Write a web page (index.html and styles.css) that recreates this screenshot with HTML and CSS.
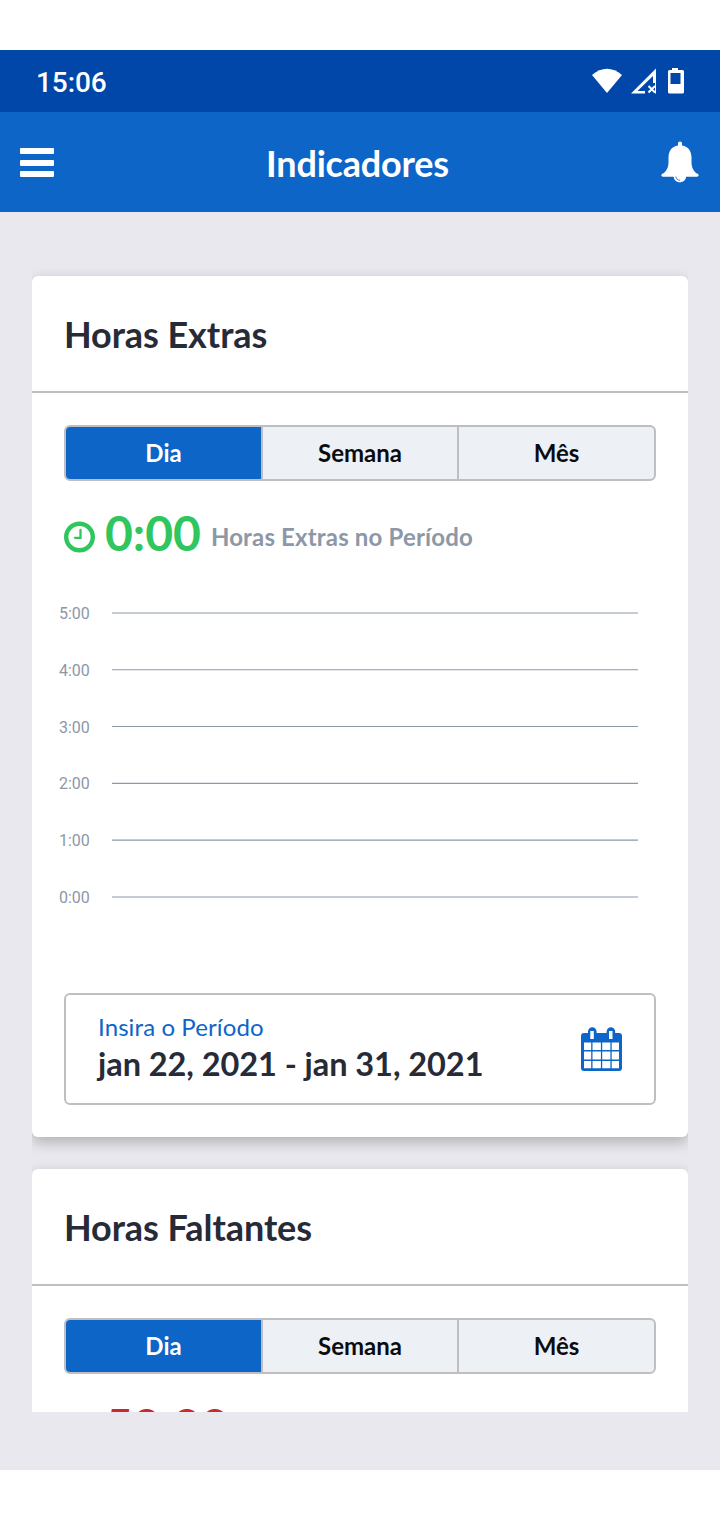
FILE: index.html
```html
<!DOCTYPE html>
<html lang="pt-BR">
<head>
<meta charset="utf-8">
<title>Indicadores</title>
<link rel="stylesheet" href="styles.css">
</head>
<body>
<div class="app">
  <div class="status-bar">
    <span class="status-time">15:06</span>
    <svg class="status-icons" width="94" height="28" viewBox="0 0 94 28" fill="#fff">
      <path d="M1 8 Q16 -4.500 31 8 L16 26Z"/>
      <path fill-rule="evenodd" d="M40 26.500 L65 1.500 V16 H62 V9 L46.500 24 H54 V26.500Z"/>
      <path d="M57.500 19l6.500 6.500M64 19L57.500 25.500" stroke="#fff" stroke-width="2"/>
      <path d="M64.500 16v10.500" stroke="#fff"/>
      <path fill-rule="evenodd" d="M81 1h6v2h4.500a1.500 1.500 0 0 1 1.500 1.500v20.500a1.500 1.500 0 0 1-1.500 1.500h-13a1.500 1.500 0 0 1-1.500-1.500v-20.500a1.500 1.500 0 0 1 1.500-1.500h2.500zM79.500 6v11h10v-11z"/>
    </svg>
  </div>
  <header class="nav-bar">
    <div class="menu"><i></i><i></i><i></i></div>
    <h1>Indicadores</h1>
    <svg class="bell" width="38" height="42" viewBox="0 0 38 42">
      <path fill="#fff" d="M17 4.500V2.500a2 2 0 0 1 4 0v2C27.500 5.500 30.500 10 30.500 17v4c0 6 2.500 10 6.500 12 1.300 1 .5 2.700-1 2.700H25c0 3.400-3 5.500-6.200 5.500s-6-2.100-6-5.500H2c-1.500 0-2.300-1.700-1-2.700 4-2 6.500-6 6.500-12v-4C7.500 10 10.500 5.500 17 4.500Z"/>
      <path fill="none" stroke="#0d65c8" stroke-width=".8" d="M14.800 35.500c.2 2.200 1.900 3.700 4.300 3.800"/>
    </svg>
  </header>
  <main class="viewport">
    <section class="card">
      <h2>Horas Extras</h2>
      <div class="card-body">
        <div class="tabs"><span class="tab active">Dia</span><span class="tab">Semana</span><span class="tab">Mês</span></div>
        <div class="total positive">
          <svg class="clock" width="32" height="32" viewBox="0 0 32 32" fill="none" stroke="currentColor"><circle cx="15.500" cy="16" r="13.300" stroke-width="4.400"/><path d="M16.500 9v7.800h-5.500" stroke-width="2.300" stroke-linecap="round"/></svg>
          <strong>0:00</strong><span class="caption">Horas Extras no Período</span>
        </div>
        <div class="chart">
          <div class="axis"><span>5:00</span><span>4:00</span><span>3:00</span><span>2:00</span><span>1:00</span><span>0:00</span></div>
          <svg class="grid" width="526" height="310" viewBox="0 0 526 310" stroke="#8c98a7" stroke-width="1.150">
            <path d="M0 10h526M0 66.700h526M0 123.500h526M0 180.300h526M0 237.100h526M0 294h526"/>
          </svg>
        </div>
        <div class="period">
          <div class="period-text">
            <span class="period-label">Insira o Período</span>
            <span class="period-value">jan 22, 2021 - jan 31, 2021</span>
          </div>
          <svg class="calendar" width="42" height="44" viewBox="0 0 42 44">
            <path fill="#0d65c8" fill-rule="evenodd" d="M3 6h4V4.500a4.300 4.300 0 0 1 8.600 0V6h10V4.500a4.300 4.300 0 0 1 8.600 0V6H38a3 3 0 0 1 3 3v32a3 3 0 0 1-3 3H3a3 3 0 0 1-3-3V9a3 3 0 0 1 3-3ZM9.300 4v8h3.500V4ZM28 4v8h3.500V4ZM3 15.500V23h7.200v-7.500ZM11.500 15.500V23h8.400v-7.500ZM21.200 15.500V23h8.200v-7.500ZM30.700 15.500V23H38v-7.500ZM3 24.500v8h7.200v-8ZM11.500 24.500v8h8.400v-8ZM21.200 24.500v8h8.200v-8ZM30.700 24.500v8H38v-8ZM3 34v7.300h7.200V34ZM11.500 34v7.300h8.400V34ZM21.200 34v7.300h8.200V34ZM30.700 34v7.300H38V34Z"/>
          </svg>
        </div>
      </div>
    </section>
    <section class="card">
      <h2>Horas Faltantes</h2>
      <div class="card-body">
        <div class="tabs"><span class="tab active">Dia</span><span class="tab">Semana</span><span class="tab">Mês</span></div>
        <div class="total negative">
          <svg class="clock" width="32" height="32" viewBox="0 0 32 32" fill="none" stroke="currentColor"><circle cx="15.500" cy="16" r="13.300" stroke-width="4.400"/><path d="M16.500 9v7.800h-5.500" stroke-width="2.300" stroke-linecap="round"/></svg>
          <strong>50:00</strong>
        </div>
      </div>
    </section>
  </main>
</div>
</body>
</html>
```
FILE: styles.css
```css
* { box-sizing: border-box; }
body { margin: 0; padding: 50px 0; background: #fff; font-family: Lato, sans-serif; color: #272b37; }
.app { height: 1420px; background: #e9e8ee; }
.status-bar { height: 62px; padding: 0 35px 0 36px; background: #0047a9; display: flex; justify-content: space-between; align-items: center; }
.status-time { font: 500 28px/32px Roboto, sans-serif; color: #fff; padding-top: 4px; letter-spacing: -.1px; }
.status-icons { display: block; }
.nav-bar { height: 100px; padding: 0 21px 0 20px; background: #0d65c8; display: flex; justify-content: space-between; align-items: center; }
.menu { width: 34px; display: flex; flex-direction: column; gap: 5.5px; padding-top: 1px; }
.menu i { height: 6px; border-radius: 1px; background: #fff; }
.nav-bar h1 { margin: 0; padding-top: 2px; font-size: 36px; line-height: 44px; font-weight: 700; color: #fff; letter-spacing: -.2px; }
.bell { display: block; margin-top: 0; }
.viewport { height: 1200px; margin: 0 32px; padding-top: 64px; overflow: hidden; }
.card { background: #fff; border-radius: 6px; margin-bottom: 32px; box-shadow: 0 5px 14px rgba(0,0,0,.25); }
.card h2 { margin: 0; height: 117px; padding: 1px 32px 0; border-bottom: 2px solid #bfbfc1; font-size: 36px; line-height: 115px; font-weight: 700; letter-spacing: -.07px; }
.card-body { padding: 32px; }
.tabs { height: 56px; display: grid; grid-template-columns: 195px 196px 1fr; border: 2px solid #bfbfc1; border-radius: 6px; background: #edf0f5; overflow: hidden; }
.tab { text-align: center; font-size: 24px; line-height: 51px; font-weight: 700; color: #0b0c10; }
.tab + .tab { border-left: 2px solid #bfbfc1; }
.tab.active { background: #0d65c8; color: #fff; }
.total { height: 106px; padding-top: 23px; display: flex; align-items: flex-start; white-space: nowrap; }
.clock { margin-top: 17px; flex: none; }
.total strong { font-size: 48px; line-height: 58px; margin-left: 9px; }
.positive { color: #2fc65e; }
.negative { color: #c9292f; }
.caption { margin: 18px 0 0 10px; font-size: 24px; line-height: 30px; font-weight: 700; color: #8c98a7; letter-spacing: .16px; }
.chart { margin: 16px -14px 0 -5px; height: 310px; display: flex; }
.axis { width: 53px; flex: none; }
.axis span { display: block; height: 56.8px; padding-top: 1px; font: 400 16px/20px Roboto, sans-serif; color: #8c98a7; }
.grid { display: block; flex: none; }
.period { height: 112px; margin-top: 80px; padding: 0 31px 0 32px; border: 2px solid #bfbfc1; border-radius: 6px; display: flex; justify-content: space-between; align-items: center; }
.period-text { display: flex; flex-direction: column; white-space: nowrap; margin-top: -1px; }
.period-label { font-size: 24px; line-height: 31px; color: #0d65c8; letter-spacing: .1px; }
.period-value { font-size: 32.5px; line-height: 44px; font-weight: 700; letter-spacing: -.06px; }
.calendar { flex: none; }
```
